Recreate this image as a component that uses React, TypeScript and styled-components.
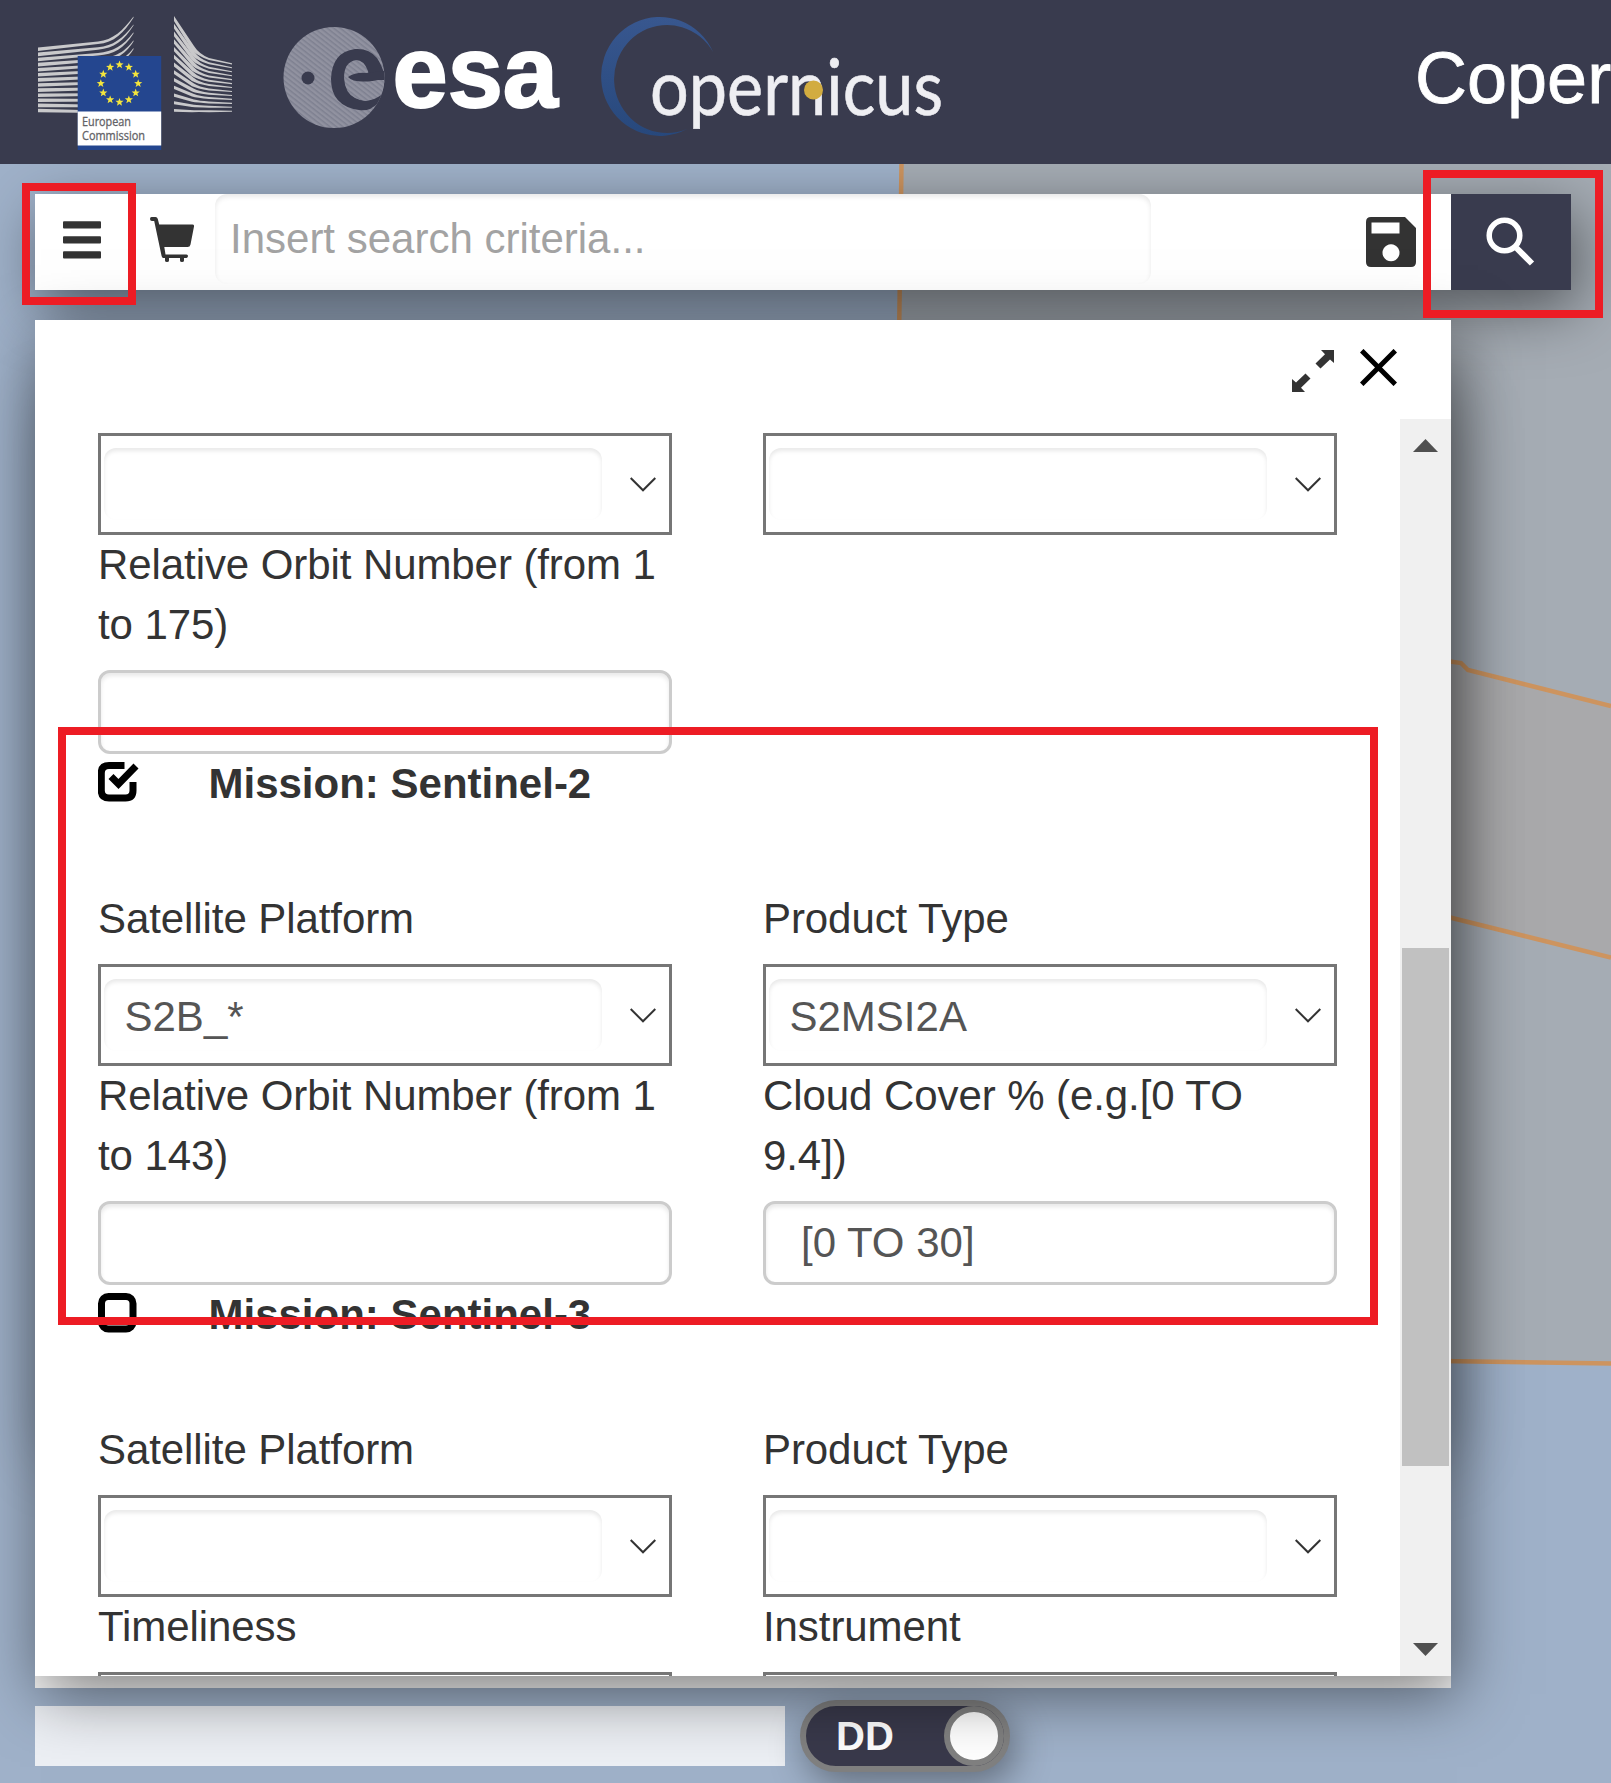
import React from "react";
import styled, { createGlobalStyle, css } from "styled-components";

const NAVY = "#393b4e";
const INK = "#333333";
const RED = "#ed1c24";

const GlobalStyle = createGlobalStyle`
  * { box-sizing: border-box; }
  html, body { margin: 0; padding: 0; overflow: hidden; }
  body { font-family: "Liberation Sans", Arial, Helvetica, sans-serif; color: ${INK}; }
`;

const floatingShadow = css`
  box-shadow: 6px 18px 60px rgba(0, 0, 0, 0.5);
`;

const Page = styled.div`
  position: relative;
  width: 1611px;
  height: 1783px;
  overflow: hidden;
  display: flex;
  flex-direction: column;
  background: #9fb1c9;
`;

const MapCanvas = styled.svg`
  position: absolute;
  left: 0;
  top: 164px;
`;

const Header = styled.header`
  position: relative;
  z-index: 3;
  flex: none;
  display: flex;
  align-items: flex-start;
  height: 164px;
  padding-left: 30px;
  background: ${NAVY};
`;

const Logo = styled.svg`
  display: block;
  flex: none;
  overflow: visible;
`;

const SiteTitle = styled.h1`
  margin: 0 0 0 auto;
  height: 164px;
  width: 197px;
  padding-left: 1px;
  font-size: 72px;
  font-weight: 400;
  line-height: 156px;
  color: #fff;
  white-space: nowrap;
  -webkit-text-stroke: 0.8px #fff;
`;

const Main = styled.main`
  position: relative;
  display: flex;
  flex-direction: column;
  padding: 30px 40px 0 35px;
`;

const SearchBar = styled.div`
  display: flex;
  height: 96px;
  background: #fff;
  ${floatingShadow}
`;

const BarButton = styled.button<{ $width: number; $dark?: boolean; $lift?: number }>`
  display: flex;
  align-items: center;
  justify-content: center;
  width: ${(p) => p.$width}px;
  height: 96px;
  padding: 0 0 ${(p) => p.$lift ?? 0}px 0;
  border: 0;
  background: ${(p) => (p.$dark ? NAVY : "transparent")};
`;

const SearchField = styled.input`
  width: 936px;
  height: 90px;
  padding: 0 15px;
  border: 0;
  border-radius: 12px;
  background: transparent;
  box-shadow: inset 0 3px 5px rgba(0, 0, 0, 0.09);
  font: 42px "Liberation Sans", Arial, sans-serif;
  &::placeholder { color: #a3a3a3; opacity: 1; }
`;

const Spacer = styled.div`
  flex: 1;
`;

const PanelShell = styled.div`
  position: relative;
  z-index: 1;
  width: 1416px;
  margin-top: 30px;
  &::before {
    content: "";
    position: absolute;
    z-index: -1;
    inset: 60px 0 236px 0;
    box-shadow: 6px 18px 60px rgba(0, 0, 0, 0.26);
  }
`;

const Panel = styled.section`
  height: 1356px;
  display: flex;
  flex-direction: column;
  background: #fff;
  ${floatingShadow}
`;

const PanelHeader = styled.div`
  flex: none;
  display: flex;
  justify-content: flex-end;
  align-items: flex-start;
  gap: 26px;
  height: 99px;
  padding: 29px 54px 0 0;
`;

const PanelBody = styled.div`
  flex: 1;
  min-height: 0;
  display: flex;
`;

const FormViewport = styled.div`
  flex: 1;
  overflow: hidden;
  padding: 14px 0 0 63px;
`;

const FieldGrid = styled.div`
  display: grid;
  grid-template-columns: 574px 574px;
  column-gap: 91px;
`;

const Label = styled.label`
  display: block;
  padding-bottom: 15px;
  font-size: 42px;
  line-height: 60px;
  letter-spacing: -0.08px;
`;

const SelectBox = styled.div`
  display: flex;
  align-items: center;
  justify-content: space-between;
  height: 102px;
  padding: 0 13px 0 3px;
  border: 3px solid #767676;
`;

const SelectValue = styled.div`
  width: 498px;
  height: 72px;
  padding-left: 20.5px;
  border-radius: 12px;
  box-shadow: inset 0 3px 4px rgba(0, 0, 0, 0.09);
  font-size: 42px;
  line-height: 75px;
  color: #555;
`;

const TextField = styled.input`
  display: block;
  width: 574px;
  height: 84px;
  padding: 0 35px;
  border: 3px solid #ccc;
  border-radius: 12px;
  background: #fff;
  box-shadow: inset 0 3px 4px rgba(0, 0, 0, 0.09);
  font: 42px "Liberation Sans", Arial, sans-serif;
  color: #555;
`;

const MissionRow = styled.div`
  display: flex;
  align-items: flex-start;
  gap: 68.5px;
  height: 60px;
  margin-bottom: 75px;
  font-size: 42px;
  font-weight: 700;
  line-height: 60px;
  svg { flex: none; margin-top: 8px; }
`;

const ScrollTrack = styled.div`
  display: flex;
  flex-direction: column;
  align-items: center;
  width: 51px;
  padding: 20px 0;
  background: #f0f0f0;
`;

const ScrollThumb = styled.div`
  width: 47px;
  height: 518px;
  margin: 496px 0 auto;
  background: #c1c1c1;
`;

const ResultsEdge = styled.div`
  height: 12px;
  width: 1416px;
  background: #fcfcfc;
`;

const FooterRow = styled.div`
  display: flex;
  align-items: center;
  gap: 15px;
  height: 72px;
  margin-top: 12px;
`;

const StatusField = styled.div`
  width: 750px;
  height: 60px;
  background: rgba(255, 255, 255, 0.8);
`;

const Toggle = styled.div`
  display: flex;
  align-items: center;
  justify-content: space-between;
  width: 210px;
  height: 72px;
  padding-left: 30px;
  border: 6px solid #808080;
  border-radius: 36px;
  background: #39394b;
  box-shadow: 6px 12px 36px rgba(0, 0, 0, 0.38);
  color: #fff;
  font-size: 40px;
  font-weight: 700;
  line-height: 58px;
`;

const ToggleKnob = styled.span`
  width: 60px;
  height: 60px;
  border: 6px solid #808080;
  border-radius: 50%;
  background: #fff;
`;

const Callout = styled.div<{ $x: number; $y: number; $w: number; $h: number }>`
  position: absolute;
  z-index: 4;
  left: ${(p) => p.$x}px;
  top: ${(p) => p.$y}px;
  width: ${(p) => p.$w}px;
  height: ${(p) => p.$h}px;
  border: 8px solid ${RED};
`;

const starPoints = (cx: number, cy: number, r: number) =>
  Array.from({ length: 10 }, (_, i) => {
    const a = -Math.PI / 2 + (i * Math.PI) / 5;
    const d = i % 2 ? r * 0.42 : r;
    return `${(cx + d * Math.cos(a)).toFixed(2)},${(cy + d * Math.sin(a)).toFixed(2)}`;
  }).join(" ");

function CommissionLogo() {
  return (
    <Logo width="230" height="164" viewBox="30 0 230 164">
      <g fill="#c9c9cb">
        {Array.from({ length: 13 }, (_, i) => {
          const l = 47.5 + i * 5.1;
          const m = 41.5 + i * 5.75;
          const r = 16.5 + i * 7.9;
          return (
            <path
              key={i}
              d={`M38 ${l}L98 ${m}C113 ${m - 1.5} 123 ${r + 14} 133.5 ${r}V${r + 1.2}C124 ${r + 16} 114 ${m + 1.5} 98 ${m + 2.4}L38 ${l + 3.6}Z`}
            />
          );
        })}
        {Array.from({ length: 13 }, (_, i) => {
          const t = i / 12;
          const l = 16 + i * 7.75;
          const m = 54 + i * 4.68;
          const r = 63.3 + i * 3.95;
          return (
            <path
              key={i}
              d={`M174 ${l}L194 ${m - 8 * (1 - t)}Q199 ${m} 209 ${m + 4 * (1 - t)}L232 ${r}V${r + 1.1}L209 ${m + 2 + 4 * (1 - t)}Q197 ${m + 1.8} 192 ${m - 6 * (1 - t) + 2}L174 ${l + 5 - t * 2.2}Z`}
            />
          );
        })}
      </g>
      <rect x="77.7" y="56" width="83.5" height="94" fill="#24468f" />
      <rect x="77.7" y="111.5" width="83.5" height="34" fill="#fff" />
      {Array.from({ length: 12 }, (_, i) => {
        const a = (i * Math.PI) / 6;
        return (
          <polygon
            key={i}
            fill="#f4e53c"
            points={starPoints(119.5 + 18.7 * Math.sin(a), 83.5 - 18.7 * Math.cos(a), 4.3)}
          />
        );
      })}
      <g fill="#626266" stroke="#626266" strokeWidth="0.3" fontFamily="'Open Sans', 'Noto Sans', sans-serif" fontSize="12.6">
        <text x="82" y="126" textLength="49" lengthAdjust="spacingAndGlyphs">European</text>
        <text x="82" y="139.7" textLength="63" lengthAdjust="spacingAndGlyphs">Commission</text>
      </g>
    </Logo>
  );
}

function EsaLogo() {
  return (
    <Logo width="320" height="164" viewBox="260 0 320 164">
      <defs>
        <clipPath id="globe"><circle cx="334" cy="77.5" r="50.5" /></clipPath>
        <pattern id="hatch" width="4" height="4" patternUnits="userSpaceOnUse" patternTransform="rotate(38)">
          <rect width="4" height="4" fill="#9192a0" />
          <rect width="4" height="1.5" fill="#7e8090" />
        </pattern>
      </defs>
      <g clipPath="url(#globe)">
        <rect x="283" y="26" width="102" height="103" fill="url(#hatch)" />
        <circle cx="308" cy="78" r="6.5" fill={NAVY} />
        <path
          fill={NAVY}
          d="M386 80H366Q369 76 368 71Q364 60 356 60Q344 62 344 78Q345 93 355 98Q366 104 378 97L386 92L390 96L370 109Q365 111 359 110Q331 106 331 79Q332 52 355 49Q369 48 377 58Q383 67 386 80Z"
        />
        <path fill="url(#hatch)" d="M345 80Q356 86 386 81V87Q379 98 366 101Q351 99 346 86Z" />
        <path d="M348 77Q356 72 366 73L384 71V79Q355 85 348 77Z" fill={NAVY} />
      </g>
      <text
        x="392.5"
        y="106.5"
        fontFamily="'Liberation Sans', Arial, sans-serif"
        fontWeight="700"
        fontSize="102"
        fill="#fff"
        stroke="#fff"
        strokeWidth="2"
        textLength="165.5"
        lengthAdjust="spacingAndGlyphs"
      >
        esa
      </text>
    </Logo>
  );
}

function CopernicusLogo() {
  return (
    <Logo width="380" height="164" viewBox="580 0 380 164">
      <defs>
        <linearGradient id="arc" x1="0" y1="0" x2="0" y2="1">
          <stop offset="0" stopColor="#38578f" />
          <stop offset="1" stopColor="#27487c" />
        </linearGradient>
      </defs>
      <path d="M712 52A58.5 59.5 0 1 0 686 129A53 54 0 1 1 712 52Z" fill="url(#arc)" transform="translate(1 0)" />
      <text
        x="650"
        y="114.5"
        fontFamily="Lato, sans-serif"
        fontSize="77"
        fill="#eeeef2"
        stroke="#eeeef2"
        strokeWidth="0.6"
        textLength="293"
        lengthAdjust="spacingAndGlyphs"
      >
        opernicus
      </text>
      <circle cx="813.5" cy="90" r="9.5" fill="#d2ac40" />
    </Logo>
  );
}

const MenuIcon = () => (
  <svg width="38" height="38" viewBox="0 0 38 38" fill={INK}>
    <rect y="0.3" width="38" height="7.2" rx="1" />
    <rect y="15.3" width="38" height="7.2" rx="1" />
    <rect y="30.3" width="38" height="7.2" rx="1" />
  </svg>
);

const CartIcon = () => (
  <svg width="44" height="46" viewBox="149 217 44 46" fill={INK}>
    <path d="M150.5 217H154.5Q156.3 217 156.8 219L158.2 224.5H191.5Q193.3 224.5 193 226.5L189.5 244.5Q189 247 186.5 247H163.3L164.5 254.5H185.5Q187 254.5 187 256T185.5 258H183V260.5Q183 262 181 262T179 260.5V258H168V260.5Q168 262 166 262T164 260.5V258H162.3Q161 258 160.6 256L153.2 221H151Q149 221 149 219T150.5 217Z" />
  </svg>
);

const SaveIcon = () => (
  <svg width="50" height="50" viewBox="0 0 50 50">
    <path
      fill={INK}
      fillRule="evenodd"
      d="M5 0H39L50 11V45Q50 50 45 50H5Q0 50 0 45V5Q0 0 5 0ZM5.5 5.5V16.5H33.5V5.5ZM25 27.3A8.5 8.5 0 1 0 25.01 27.3Z"
    />
  </svg>
);

const SearchIcon = () => (
  <svg width="50" height="50" viewBox="0 0 50 50" fill="none" stroke="#fff">
    <circle cx="18.5" cy="18.5" r="15.3" strokeWidth="5.5" />
    <path d="M30.5 31L46 46.5" strokeWidth="6" />
  </svg>
);

const ExpandIcon = () => (
  <svg width="42" height="43" viewBox="0 -1 42 43" fill={INK}>
    <path d="M29 0H42V13L38 9.5L28.5 18.5L23.5 13.5L33 4.3Z" />
    <path d="M13 42H0V29L4 32.5L13.5 23.5L18.5 28.5L9 37.7Z" />
  </svg>
);

const CloseIcon = () => (
  <svg width="37" height="37" viewBox="0 0 37 37" stroke="#000" strokeWidth="5">
    <path d="M1.7 1.7L35.3 35.3M35.3 1.7L1.7 35.3" />
  </svg>
);

const Chevron = () => (
  <svg width="26" height="15" viewBox="0 0 26 15" fill="none" stroke={INK} strokeWidth="2">
    <path d="M0.7 1L13 13.3L25.3 1" />
  </svg>
);

const CheckedIcon = () => (
  <svg width="42" height="40" viewBox="0 0 42 40" fill="none" stroke="#000">
    <path d="M26.5 3.5H11Q3.3 3.5 3.3 11V28.5Q3.3 36 11 36H27.5Q35 36 35 28.5V20" strokeWidth="7" />
    <path d="M13 14.5L20.5 22L38 4" strokeWidth="7" />
  </svg>
);

const UncheckedIcon = () => (
  <svg width="42" height="40" viewBox="0 0 42 40" fill="none" stroke="#000">
    <rect x="3.5" y="3.5" width="31.5" height="32.5" rx="7" strokeWidth="7" />
  </svg>
);

const ScrollArrow = ({ down }: { down?: boolean }) => (
  <svg width="25" height="13" viewBox="0 0 25 13" fill="#505050">
    <path d={down ? "M0 0H25L12.5 13Z" : "M0 13H25L12.5 0Z"} />
  </svg>
);

const Select = ({ value }: { value?: string }) => (
  <SelectBox>
    <SelectValue>{value}</SelectValue>
    <Chevron />
  </SelectBox>
);

const SelectField = ({ label, value }: { label: string; value?: string }) => (
  <div>
    <Label>{label}</Label>
    <Select value={value} />
  </div>
);

const InputField = ({ label, value }: { label: string; value?: string }) => (
  <div>
    <Label>{label}</Label>
    <TextField defaultValue={value} />
  </div>
);

const Mission = ({ name, checked }: { name: string; checked?: boolean }) => (
  <MissionRow>
    {checked ? <CheckedIcon /> : <UncheckedIcon />}
    <span>Mission: {name}</span>
  </MissionRow>
);

function MapBackground() {
  return (
    <MapCanvas width="1611" height="1619" viewBox="0 164 1611 1619">
      <path d="M901 164H1611V1363L1400 1360H901Z" fill="#a5acb4" />
      <path d="M1400 648L1462 662L1468 670L1611 706V957L1400 904Z" fill="#a9a9ab" />
      <g fill="none" stroke="#cd945f" strokeWidth="4.5">
        <path d="M901.5 164L899 340" />
        <path d="M1440 660L1461 663L1468 670L1611 706" />
        <path d="M1440 915L1611 957.5" />
        <path d="M1440 1361L1611 1363.5" />
      </g>
    </MapCanvas>
  );
}

export default function App() {
  return (
    <>
      <GlobalStyle />
      <Page>
        <MapBackground />
        <Header>
          <CommissionLogo />
          <EsaLogo />
          <CopernicusLogo />
          <SiteTitle>Coper</SiteTitle>
        </Header>
        <Main>
          <SearchBar>
            <BarButton $width={93} $lift={4} aria-label="Menu"><MenuIcon /></BarButton>
            <BarButton $width={87} $lift={4} aria-label="Cart"><CartIcon /></BarButton>
            <SearchField placeholder="Insert search criteria..." />
            <Spacer />
            <BarButton $width={120} aria-label="Save"><SaveIcon /></BarButton>
            <BarButton $width={120} $dark aria-label="Search"><SearchIcon /></BarButton>
          </SearchBar>
          <PanelShell>
            <Panel>
              <PanelHeader>
                <ExpandIcon />
                <CloseIcon />
              </PanelHeader>
              <PanelBody>
                <FormViewport>
                  <FieldGrid>
                    <Select />
                    <Select />
                    <InputField label="Relative Orbit Number (from 1 to 175)" />
                  </FieldGrid>
                  <Mission name="Sentinel-2" checked />
                  <FieldGrid>
                    <SelectField label="Satellite Platform" value="S2B_*" />
                    <SelectField label="Product Type" value="S2MSI2A" />
                    <InputField label="Relative Orbit Number (from 1 to 143)" />
                    <InputField label="Cloud Cover % (e.g.[0 TO 9.4])" value="[0 TO 30]" />
                  </FieldGrid>
                  <Mission name="Sentinel-3" />
                  <FieldGrid>
                    <SelectField label="Satellite Platform" />
                    <SelectField label="Product Type" />
                    <SelectField label="Timeliness" />
                    <SelectField label="Instrument" />
                  </FieldGrid>
                </FormViewport>
                <ScrollTrack>
                  <ScrollArrow />
                  <ScrollThumb />
                  <ScrollArrow down />
                </ScrollTrack>
              </PanelBody>
            </Panel>
          </PanelShell>
          <ResultsEdge />
          <FooterRow>
            <StatusField />
            <Toggle>
              DD
              <ToggleKnob />
            </Toggle>
          </FooterRow>
        </Main>
        <Callout $x={22} $y={183} $w={114} $h={122} />
        <Callout $x={1423} $y={170} $w={180} $h={148} />
        <Callout $x={58} $y={727} $w={1320} $h={598} />
      </Page>
    </>
  );
}
